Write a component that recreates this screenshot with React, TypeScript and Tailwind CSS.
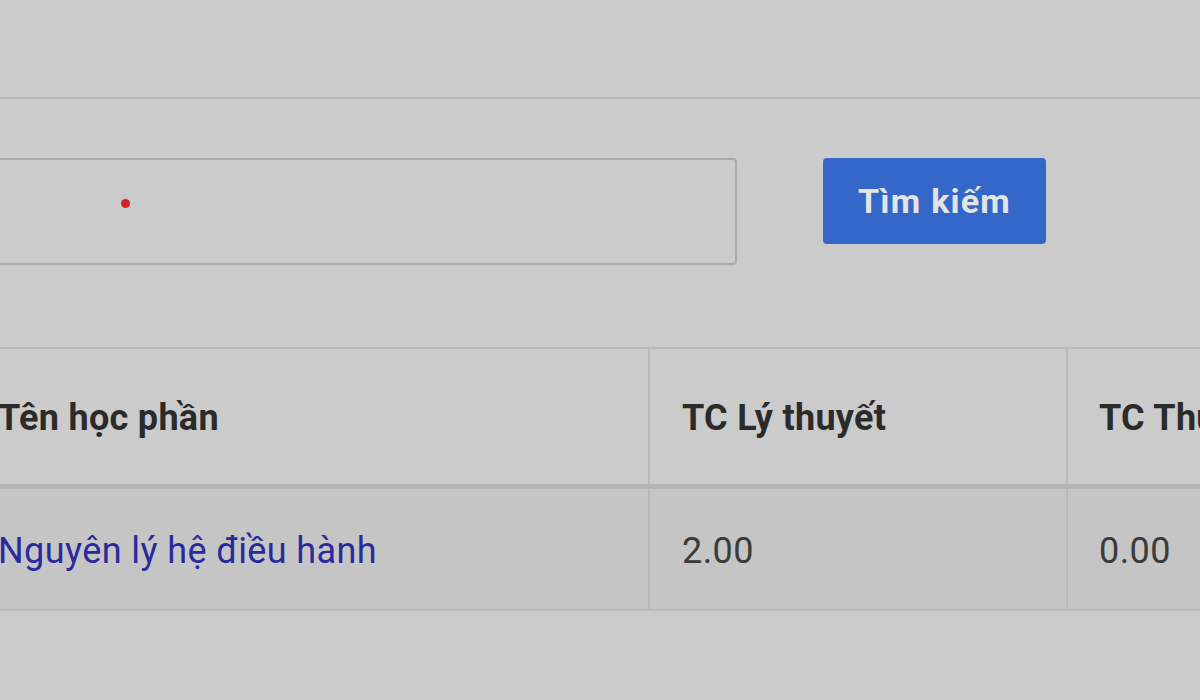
function App() {
  return (
    <div
      className="w-[1200px] h-[700px] overflow-hidden bg-[#cbcbcb]"
      style={{ fontFamily: "Roboto, 'Liberation Sans', sans-serif" }}
    >
      <div className="h-[99px] border-b-2 border-[#b9b9b9]" />

      <div className="-ml-[35px]">
        <div className="flex items-start gap-[86px] mt-[59px]">
          <div className="w-[772px] h-[107px] border-2 border-[#ababab] rounded-[4px] pl-[154px] pt-[39px]">
            <span className="block w-[9px] h-[9px] rounded-full bg-[#d42020]" />
          </div>
          <button className="w-[223px] h-[86px] rounded-[4px] bg-[#3367c9] text-[#e4e4e4] font-bold text-[34px] tracking-[1.2px]">
            Tìm kiếm
          </button>
        </div>

        <div className="mt-[82px] w-[1600px] border-t-2 border-[#b9b9b9]">
          <div className="grid grid-cols-[685px_418px_497px] h-[140px] border-b-[5px] border-[#b4b4b4] text-[#2b2b2b] font-bold text-[36px] tracking-[0.3px]">
            <div className="flex items-center pl-[33px] pt-[3px] border-r-2 border-[#b9b9b9]">Tên học phần</div>
            <div className="flex items-center pl-[32px] pt-[3px] border-r-2 border-[#b9b9b9]">TC Lý thuyết</div>
            <div className="flex items-center pl-[31px] pt-[3px]">TC Thực hành</div>
          </div>
          <div className="grid grid-cols-[685px_418px_497px] h-[122px] bg-[#c5c5c5] border-b-2 border-[#b9b9b9] text-[36px] tracking-[0.4px]">
            <div className="flex items-center pl-[33px] pt-[3px] border-r-2 border-[#b9b9b9] text-[#2a2a9e]">
              Nguyên lý hệ điều hành
            </div>
            <div className="flex items-center pl-[32px] pt-[3px] border-r-2 border-[#b9b9b9] text-[#3b3b3b]">2.00</div>
            <div className="flex items-center pl-[31px] pt-[3px] text-[#3b3b3b]">0.00</div>
          </div>
        </div>
      </div>
    </div>
  );
}

export default App;
